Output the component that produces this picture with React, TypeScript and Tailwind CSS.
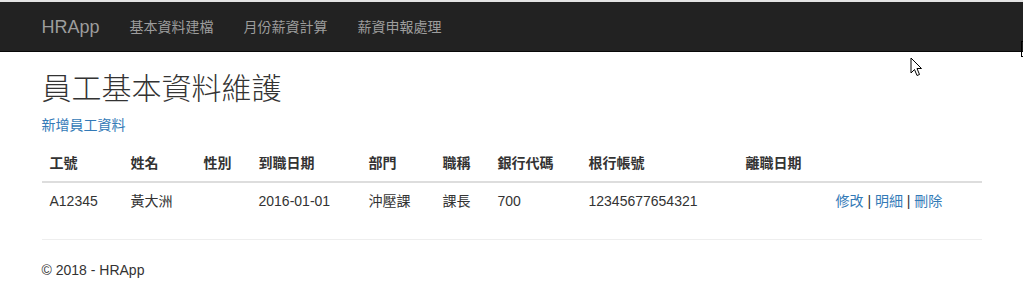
import React from 'react';

const font = { fontFamily: '"Liberation Sans", "Noto Sans CJK TC", Arial, sans-serif' };

const columns = [
  { label: '工號', w: 'w-[81px]' },
  { label: '姓名', w: 'w-[73px]' },
  { label: '性別', w: 'w-[55px]' },
  { label: '到職日期', w: 'w-[110px]' },
  { label: '部門', w: 'w-[74px]' },
  { label: '職稱', w: 'w-[55px]' },
  { label: '銀行代碼', w: 'w-[91px]' },
  { label: '根行帳號', w: 'w-[157px]' },
  { label: '離職日期', w: 'w-[90px]' },
  { label: '', w: 'w-[154px]' },
];

const row = ['A12345', '黃大洲', '', '2016-01-01', '沖壓課', '課長', '700', '12345677654321', ''];

const Cursor = () => (
  <svg className="absolute left-[910px] top-[57px]" width="13" height="20" viewBox="0 0 13 20">
    <path d="M1 1 L1 16 L4.5 12.5 L7 18.5 L9.5 17.5 L7 11.5 L11.5 11.5 Z" fill="#fff" stroke="#000" strokeWidth="1" strokeLinejoin="round" />
  </svg>
);

export default function App() {
  return (
    <div className="relative w-[1023px] h-[285px] bg-white text-[14px] text-[#333] overflow-hidden" style={font}>
      <div className="h-[2px] bg-[#e4e4e4]" />
      <nav className="h-[50px] bg-[#222] border-b border-[#080808] box-border">
        <div className="w-[940px] mx-auto flex items-center h-full">
          <span className="text-[18px] text-[#9d9d9d] pr-[15px] leading-[20px]">HRApp</span>
          {['基本資料建檔', '月份薪資計算', '薪資申報處理'].map((t) => (
            <span key={t} className="px-[15px] text-[#9d9d9d] leading-[20px]">{t}</span>
          ))}
        </div>
      </nav>

      <div className="w-[940px] mx-auto">
        <h2 className="text-[30px] leading-[33px] mt-[20px] mb-[10px] font-light text-[#333]">員工基本資料維護</h2>
        <p className="leading-[20px] mb-[10px]">
          <span className="text-[#337ab7]">新增員工資料</span>
        </p>

        <table className="w-full border-collapse mb-[20px]">
          <thead>
            <tr className="border-b-2 border-[#ddd]">
              {columns.map((c, i) => (
                <th key={i} className={`${c.w} p-[8px] text-left font-bold leading-[20px]`}>{c.label}</th>
              ))}
            </tr>
          </thead>
          <tbody>
            <tr className="border-t border-[#ddd]">
              {row.map((v, i) => (
                <td key={i} className="p-[8px] leading-[20px]">{v}</td>
              ))}
              <td className="p-[8px] leading-[20px]">
                <span className="text-[#337ab7]">修改</span> | <span className="text-[#337ab7]">明細</span> |{' '}
                <span className="text-[#337ab7]">刪除</span>
              </td>
            </tr>
          </tbody>
        </table>

        <hr className="border-0 border-t border-[#eee] my-[20px]" />
        <footer>
          <p className="leading-[20px]">© 2018 - HRApp</p>
        </footer>
      </div>

      <div className="absolute right-0 top-[41px] w-[2px] h-[16px] border border-r-0 border-black" />
      <Cursor />
    </div>
  );
}
